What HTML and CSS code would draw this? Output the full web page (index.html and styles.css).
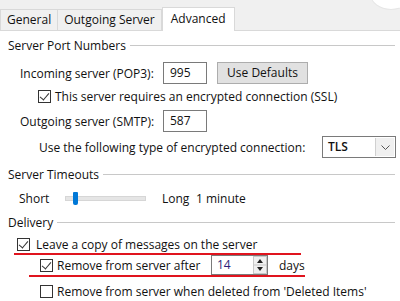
FILE: index.html
```html
<!DOCTYPE html>
<html lang="en">
<head>
    <meta charset="UTF-8">
    <title>Advanced</title>
    <link rel="stylesheet" href="styles.css">
</head>
<body>
    <div class="dialog">
        <div class="tabs">
            <div class="tab">General</div>
            <div class="tab">Outgoing Server</div>
            <div class="tab active">Advanced</div>
            <div class="corner"></div>
        </div>

        <div class="panel">
            <div class="group">Server Port Numbers</div>
            <div class="row r-in">
                <span class="label">Incoming server (POP3):</span>
                <span class="field port">995</span>
                <span class="button">Use Defaults</span>
            </div>
            <div class="row r-ssl">
                <span class="check on"></span>
                <span>This server requires an encrypted connection (SSL)</span>
            </div>
            <div class="row r-out">
                <span class="label">Outgoing server (SMTP):</span>
                <span class="field port">587</span>
            </div>
            <div class="row r-enc">
                <span class="label">Use the following type of encrypted connection:</span>
                <span class="select">
                    <span class="sel-text">TLS</span>
                    <span class="sel-arrow">
                        <svg width="9" height="5" viewBox="0 0 9 5"><path d="M0.5 0.5 L4.5 4.5 L8.5 0.5" fill="none" stroke="#555" stroke-width="1"/></svg>
                    </span>
                </span>
            </div>

            <div class="group">Server Timeouts</div>
            <div class="row r-time">
                <span class="short">Short</span>
                <span class="slider"><span class="thumb"></span></span>
                <span class="long">Long</span>
                <span>1 minute</span>
            </div>

            <div class="group">Delivery</div>
            <div class="row r-leave">
                <span class="check on"></span>
                <span>Leave a copy of messages on the server</span>
                <span class="mark m1"></span>
            </div>
            <div class="row r-remove">
                <span class="check on"></span>
                <span class="after">Remove from server after</span>
                <span class="spin">
                    <span class="spin-text">14</span>
                    <span class="spin-btns">
                        <svg width="14" height="18" viewBox="0 0 14 18">
                            <rect x="0.5" y="0.5" width="13" height="17" fill="#f0f0f0" stroke="#c8c8c8"/>
                            <line x1="1" y1="9" x2="13" y2="9" stroke="#c8c8c8"/>
                            <path d="M7 3 L10 7 L4 7 Z" fill="#222"/>
                            <path d="M4 11 L10 11 L7 15 Z" fill="#222"/>
                        </svg>
                    </span>
                </span>
                <span>days</span>
                <span class="mark m2"></span>
            </div>
            <div class="row r-del">
                <span class="check"></span>
                <span>Remove from server when deleted from 'Deleted Items'</span>
            </div>
        </div>
    </div>
</body>
</html>
```

FILE: styles.css
```css
body {
    margin: 0;
    font-family: "Open Sans", "Noto Sans", sans-serif;
    font-size: 12px;
    color: #111;
    background: #fff;
}
.dialog {
    width: 400px;
    height: 301px;
    overflow: hidden;
}
.tabs {
    display: flex;
    align-items: flex-end;
    height: 30px;
    background: #f0f0f0;
    border-bottom: 1px solid #d9d9d9;
    position: relative;
}
.tab {
    height: 20px;
    line-height: 19px;
    padding: 0 6px;
    border: 1px solid #d9d9d9;
    border-bottom: none;
    margin-right: -1px;
    background: #f0f0f0;
}
.tab.active {
    background: #fff;
    height: 23px;
    line-height: 21px;
    padding: 0 8px;
    margin-bottom: -1px;
    margin-left: 1px;
}
.corner {
    position: absolute;
    right: -12px;
    top: -22px;
    width: 40px;
    height: 30px;
    border-radius: 50%;
    background: #fff;
    border: 1px solid #e6e6e6;
}
.panel {
    display: flex;
    flex-direction: column;
    padding: 6px 0 0 8px;
}
.group {
    display: flex;
    align-items: center;
    height: 16px;
    margin-bottom: 6px;
}
.group::after {
    content: "";
    flex: 1;
    height: 1px;
    background: #c8c8c8;
    margin-left: 4px;
    margin-right: 5px;
}
.row {
    display: flex;
    align-items: center;
    position: relative;
    white-space: nowrap;
}
.r-in {
    padding-left: 12px;
    height: 22px;
    margin-top: 3px;
}
.r-in .label, .r-out .label {
    width: 143px;
}
.field {
    border: 1px solid #7a7a7a;
    height: 20px;
    line-height: 20px;
    padding: 0 6px;
    box-sizing: border-box;
    background: #fff;
}
.port {
    width: 44px;
    height: 22px;
}
.button {
    margin-left: 10px;
    width: 91px;
    height: 22px;
    line-height: 20px;
    text-align: center;
    box-sizing: border-box;
    border: 1px solid #adadad;
    background: #e1e1e1;
}
.r-ssl {
    padding-left: 30px;
    height: 26px;
    margin-top: -1px;
    margin-bottom: 1px;
}
.check {
    width: 13px;
    height: 13px;
    box-sizing: border-box;
    border: 1px solid #333;
    background: #fff;
    margin-right: 4px;
    position: relative;
}
.check.on::after {
    content: "";
    position: absolute;
    left: 3px;
    top: 0px;
    width: 4px;
    height: 8px;
    border-right: 1px solid #333;
    border-bottom: 1px solid #333;
    transform: rotate(40deg);
}
.r-out {
    padding-left: 12px;
    height: 22px;
}
.r-enc {
    padding-left: 31px;
    height: 30px;
    margin-bottom: 4px;
}
.r-enc .label {
    width: 283px;
}
.select {
    display: flex;
    width: 74px;
    height: 22px;
    box-sizing: border-box;
    border: 1px solid #7a7a7a;
    background: #fff;
    font-weight: 600;
}
.sel-text {
    flex: 1;
    padding-left: 5px;
    line-height: 20px;
}
.sel-arrow {
    width: 18px;
    border-left: 1px solid #d0d0d0;
    background: #f0f0f0;
    margin: 1px;
    display: flex;
    align-items: center;
    justify-content: center;
}
.r-time {
    padding-left: 11px;
    height: 28px;
    margin-top: -4px;
    margin-bottom: 2px;
}
.short {
    width: 46px;
    flex: none;
}
.slider {
    width: 79px;
    flex: none;
    height: 3px;
    background: #e5e5e5;
    border: 1px solid #d6d6d6;
    position: relative;
    margin-right: 16px;
}
.thumb {
    position: absolute;
    left: 7px;
    top: -5px;
    width: 5px;
    height: 13px;
    background: #0078d7;
    border-radius: 1px 1px 2px 2px;
}
.long {
    width: 34px;
    flex: none;
}
.r-leave {
    padding-left: 9px;
    height: 20px;
    margin-top: -2px;
}
.r-leave .check {
    margin-right: 6px;
}
.r-remove {
    padding-left: 32px;
    height: 24px;
    margin-top: -1px;
}
.after {
    width: 154px;
}
.spin {
    display: flex;
    width: 57px;
    height: 20px;
    box-sizing: border-box;
    border: 1px solid #7a7a7a;
    margin-right: 11px;
}
.spin-text {
    flex: 1;
    padding-left: 5px;
    line-height: 18px;
    color: #2b1d7a;
}
.spin-btns {
    display: flex;
}
.r-del {
    padding-left: 32px;
    height: 24px;
    margin-top: 2px;
}
.mark {
    position: absolute;
    height: 2px;
    background: #e0141e;
}
.m1 {
    left: 6px;
    width: 287px;
    bottom: -1px;
}
.m2 {
    left: 21px;
    width: 276px;
    bottom: 0px;
}
```
